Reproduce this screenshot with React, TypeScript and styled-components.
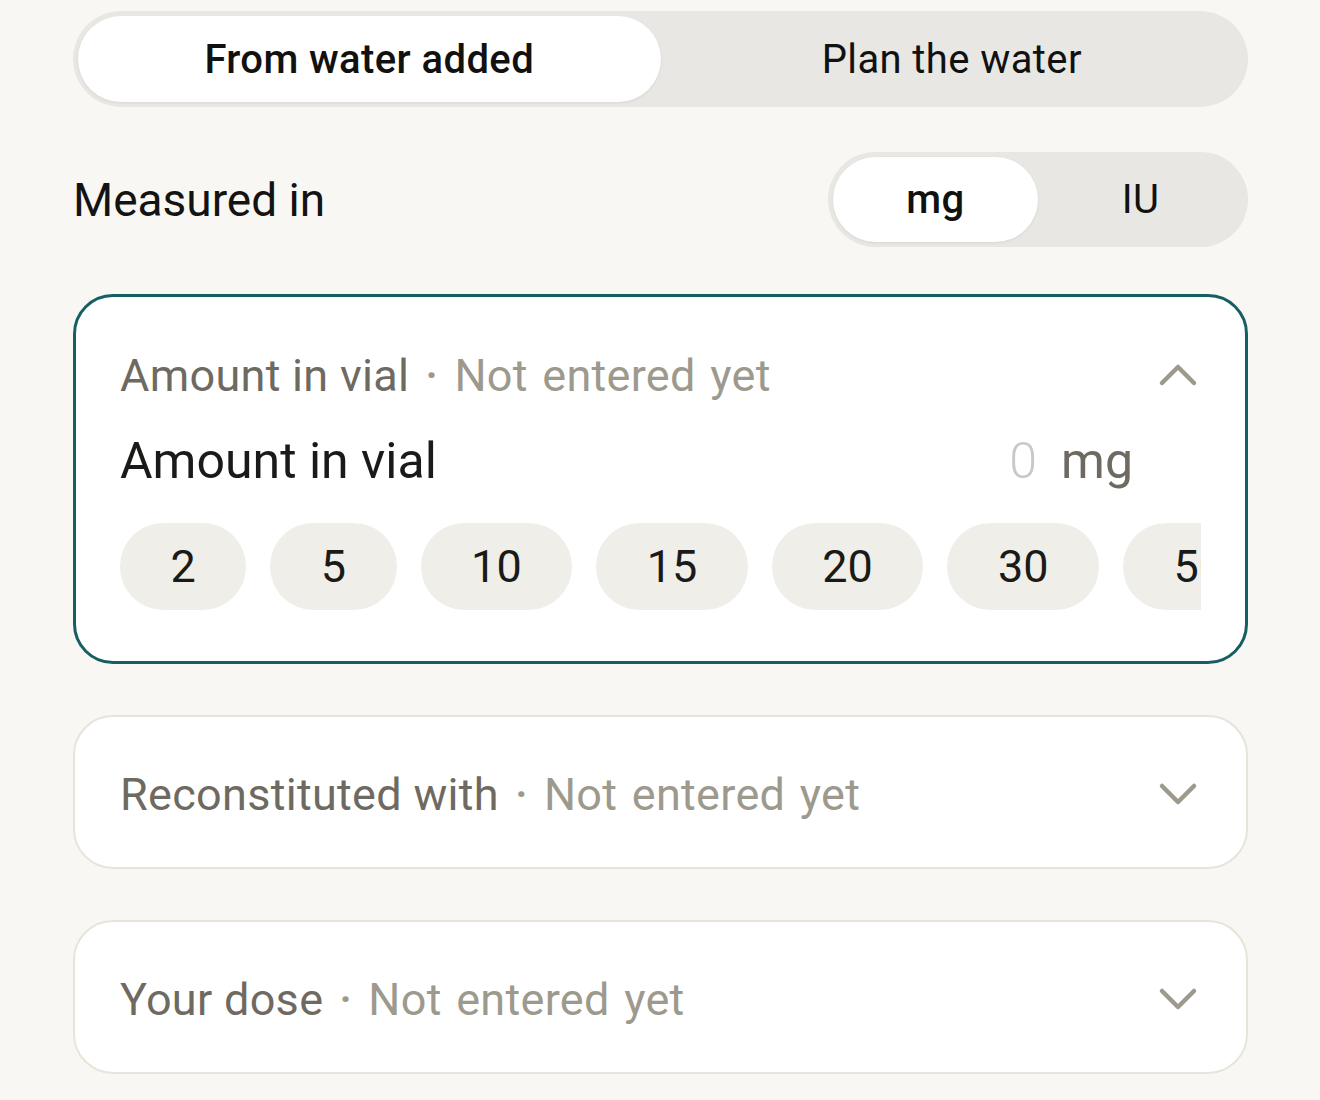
import styled, { createGlobalStyle } from "styled-components";

const GlobalStyle = createGlobalStyle`
  html, body {
    margin: 0;
    padding: 0;
    background: #f8f7f4;
  }
  body {
    font-family: Roboto, "Liberation Sans", sans-serif;
    color: #131312;
    -webkit-font-smoothing: antialiased;
  }
`;

const Page = styled.div`
  padding: 11px 72px 40px 73px;
  display: flex;
  flex-direction: column;
`;

const Segmented = styled.div<{ $width?: string; $height: number }>`
  display: grid;
  grid-template-columns: 1fr 1fr;
  width: ${(p) => p.$width || "100%"};
  height: ${(p) => p.$height}px;
  box-sizing: border-box;
  padding: 5px;
  background: #e8e7e3;
  border-radius: 999px;
`;

const Segment = styled.button<{ $active?: boolean; $size: number }>`
  border: none;
  border-radius: 999px;
  background: ${(p) => (p.$active ? "#ffffff" : "transparent")};
  box-shadow: ${(p) =>
    p.$active ? "0 1px 3px rgba(40, 36, 20, 0.08)" : "none"};
  font-family: inherit;
  font-size: ${(p) => p.$size}px;
  font-weight: ${(p) => (p.$active ? 500 : 400)};
  letter-spacing: 0.4px;
  color: #111110;
  padding: 0;
  cursor: pointer;
`;

const MeasuredRow = styled.div`
  margin-top: 45px;
  display: flex;
  align-items: center;
  justify-content: space-between;
`;

const RowLabel = styled.span`
  font-size: 46px;
`;

const Card = styled.section<{ $open?: boolean }>`
  background: #ffffff;
  border: ${(p) => (p.$open ? "3px solid #175e63" : "2px solid #e7e4db")};
  border-radius: 40px;
  padding: ${(p) => (p.$open ? "50px 44px 51px" : "0 45px")};
  display: flex;
  flex-direction: column;
  margin-top: ${(p) => (p.$open ? "47px" : "51px")};
`;

const CardHeader = styled.div<{ $open?: boolean }>`
  display: flex;
  align-items: center;
  justify-content: space-between;
  height: ${(p) => (p.$open ? "56px" : "150px")};
  padding-top: ${(p) => (p.$open ? "0" : "4px")};
  box-sizing: border-box;
`;

const HeaderText = styled.span`
  font-size: 45px;
  letter-spacing: 0.3px;
  color: #6e6a62;
  white-space: nowrap;
`;

const Separator = styled.span`
  color: #9d998d;
  font-weight: 500;
  margin: 0 16px;
`;

const Muted = styled.span`
  color: #9d998d;
  word-spacing: 3px;
`;

const Chevron = styled.svg`
  width: 40px;
  height: 40px;
  margin-right: 3px;
  flex-shrink: 0;
`;

const TitleRow = styled.div`
  margin-top: 28px;
  height: 60px;
  display: flex;
  align-items: center;
  justify-content: space-between;
`;

const FieldTitle = styled.span`
  font-size: 50px;
  color: #1a1a18;
`;

const ValueGroup = styled.div`
  display: flex;
  align-items: baseline;
  gap: 24px;
  margin-right: 68px;
  font-size: 50px;
`;

const Placeholder = styled.span`
  color: #c9c9c6;
  font-weight: 300;
`;

const Unit = styled.span`
  color: #6e6a62;
`;

const ChipScroller = styled.div`
  margin-top: 32px;
  display: flex;
  gap: 24px;
  overflow: hidden;
`;

const Chip = styled.button`
  flex-shrink: 0;
  height: 87px;
  padding: 0 50.5px;
  border: none;
  border-radius: 44px;
  background: #f0eee8;
  font-family: inherit;
  font-size: 45px;
  color: #1a1a18;
  cursor: pointer;
`;

function ChevronIcon({ up }: { up?: boolean }) {
  return (
    <Chevron viewBox="0 0 40 40" fill="none">
      <polyline
        points={up ? "4,28 20,12 36,28" : "4,12 20,28 36,12"}
        stroke="#9d998d"
        strokeWidth="4.5"
        strokeLinecap="round"
        strokeLinejoin="round"
      />
    </Chevron>
  );
}

const presets = [2, 5, 10, 15, 20, 30, 50, 100];

function CardTitle({ label }: { label: string }) {
  return (
    <HeaderText>
      {label}
      <Separator>·</Separator>
      <Muted>Not entered yet</Muted>
    </HeaderText>
  );
}

function CollapsedCard({ label }: { label: string }) {
  return (
    <Card>
      <CardHeader>
        <CardTitle label={label} />
        <ChevronIcon />
      </CardHeader>
    </Card>
  );
}

export default function App() {
  return (
    <>
      <GlobalStyle />
      <Page>
        <Segmented $height={96}>
          <Segment $active $size={40}>
            From water added
          </Segment>
          <Segment $size={40}>Plan the water</Segment>
        </Segmented>

        <MeasuredRow>
          <RowLabel>Measured in</RowLabel>
          <Segmented $width="420px" $height={95}>
            <Segment $active $size={40}>
              mg
            </Segment>
            <Segment $size={40}>IU</Segment>
          </Segmented>
        </MeasuredRow>

        <Card $open>
          <CardHeader $open>
            <CardTitle label="Amount in vial" />
            <ChevronIcon up />
          </CardHeader>
          <TitleRow>
            <FieldTitle>Amount in vial</FieldTitle>
            <ValueGroup>
              <Placeholder>0</Placeholder>
              <Unit>mg</Unit>
            </ValueGroup>
          </TitleRow>
          <ChipScroller>
            {presets.map((v) => (
              <Chip key={v}>{v}</Chip>
            ))}
          </ChipScroller>
        </Card>

        <CollapsedCard label="Reconstituted with" />
        <CollapsedCard label="Your dose" />
      </Page>
    </>
  );
}
